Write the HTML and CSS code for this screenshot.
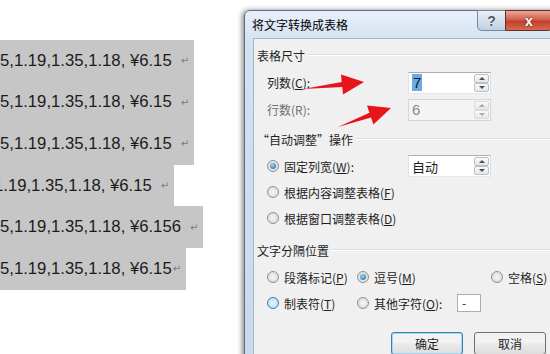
FILE: index.html
```html
<!DOCTYPE html>
<html lang="zh-CN">
<head>
    <meta charset="UTF-8">
    <title>将文字转换成表格</title>
    <link rel="stylesheet" href="styles.css">
</head>
<body>
    <div class="screen">
        <div class="doc">
            <div class="line"><span>5,1.19,1.35,1.18, ¥6.15</span><span class="mark">↵</span></div>
            <div class="line"><span>5,1.19,1.35,1.18, ¥6.15</span><span class="mark">↵</span></div>
            <div class="line"><span>5,1.19,1.35,1.18, ¥6.15</span><span class="mark">↵</span></div>
            <div class="line cut"><span>1.19,1.35,1.18, ¥6.15</span><span class="mark">↵</span></div>
            <div class="line"><span>5,1.19,1.35,1.18, ¥6.156</span><span class="mark">↵</span></div>
            <div class="line tight"><span>5,1.19,1.35,1.18, ¥6.15</span><span class="mark">↵</span></div>
        </div>

        <div class="dialog">
            <div class="titlebar">
                <span class="title">将文字转换成表格</span>
                <div class="caption">
                    <span class="help">?</span>
                    <span class="close">x</span>
                </div>
            </div>
            <div class="panel">
                <div class="group-title"><span>表格尺寸</span></div>
                <div class="fields">
                    <div class="row">
                        <span class="lbl">列数(<u>C</u>):</span>
                        <div class="spin">
                            <span class="val"><span class="sel">7</span></span>
                            <div class="updown"><span class="up"></span><span class="down"></span></div>
                        </div>
                    </div>
                    <div class="row disabled">
                        <span class="lbl">行数(R):</span>
                        <div class="spin off">
                            <span class="val">6</span>
                            <div class="updown"><span class="up"></span><span class="down"></span></div>
                        </div>
                    </div>
                </div>

                <div class="group-title second"><span>“自动调整”操作</span></div>
                <div class="fields">
                    <div class="row radio-row">
                        <span class="lbl"><i class="radio on"></i>固定列宽(<u>W</u>):</span>
                        <div class="spin">
                            <span class="val cn">自动</span>
                            <div class="updown"><span class="up"></span><span class="down"></span></div>
                        </div>
                    </div>
                    <div class="row radio-row"><i class="radio"></i>根据内容调整表格(<u>F</u>)</div>
                    <div class="row radio-row"><i class="radio"></i>根据窗口调整表格(<u>D</u>)</div>
                </div>

                <div class="group-title third"><span>文字分隔位置</span></div>
                <div class="fields">
                    <div class="row radio-row">
                        <span class="cell c1"><i class="radio"></i>段落标记(<u>P</u>)</span>
                        <span class="cell c2"><i class="radio on"></i>逗号(<u>M</u>)</span>
                        <span class="cell"><i class="radio"></i>空格(<u>S</u>)</span>
                    </div>
                    <div class="row radio-row">
                        <span class="cell c1"><i class="radio hot"></i>制表符(<u>T</u>)</span>
                        <span class="cell c2"><i class="radio"></i><span class="other">其他字符(<u>O</u>):</span><span class="tbox">-</span></span>
                    </div>
                </div>

                <div class="buttons">
                    <span class="btn default">确定</span>
                    <span class="btn">取消</span>
                </div>
            </div>
        </div>

        <svg class="pointers" width="550" height="354" viewBox="0 0 550 354">
            <polygon points="303,89 341.7,82 341,74.6 364,82 343,94.4 342.3,87"/>
            <polygon points="338,127 369.4,112.7 367,105.6 391,108 373.4,124.6 371,117.5"/>
        </svg>
    </div>
</body>
</html>
```

FILE: styles.css
```css
body {
    margin: 0;
    background-color: #fff;
    font-family: "Liberation Sans", Arial, sans-serif;
}

.screen {
    position: relative;
    display: flex;
    width: 550px;
    height: 354px;
    overflow: hidden;
}

/* documento ao fundo */
.doc {
    width: 244px;
    flex-shrink: 0;
    padding-top: 40px;
    overflow: hidden;
}

.line {
    display: flex;
    align-items: center;
    width: fit-content;
    height: 41.6px;
    padding-right: 5px;
    background-color: #c6c6c6;
    color: #1b1b1b;
    font-size: 16.7px;
    white-space: nowrap;
}

.line .mark {
    margin-left: 9px;
    font-family: "DejaVu Sans", sans-serif;
    font-size: 10px;
    color: #7a7a7a;
}

.line.cut {
    margin-left: -6px;
}

.line.tight .mark {
    margin-left: 1px;
}

/* janela */
.dialog {
    flex-shrink: 0;
    width: 330px;
    height: 360px;
    margin-top: 10px;
    padding: 0 8px;
    border: 1px solid #5d6c7f;
    border-radius: 6px 6px 0 0;
    background: linear-gradient(#e8f0fa, #d3e1f1 30px, #c9d9ec);
    box-shadow: -2px 0 5px rgba(0, 0, 0, 0.45);
    font-family: "Noto Sans CJK SC", sans-serif;
    font-size: 12px;
    color: #1e1e1e;
}

.titlebar {
    display: flex;
    justify-content: space-between;
    align-items: flex-start;
    height: 27px;
}

.title {
    margin: 7px 0 0 -1px;
    line-height: 14px;
    color: #000;
}

.caption {
    display: flex;
    margin: -1px 30px 0 0;
}

.help,
.close {
    display: flex;
    align-items: center;
    justify-content: center;
    height: 19px;
    font-family: "Liberation Sans", Arial, sans-serif;
    font-weight: bold;
    font-size: 14px;
}

.help {
    width: 27px;
    border: 1px solid #76869b;
    border-right: none;
    border-radius: 0 0 0 5px;
    background: linear-gradient(#e9f0f8, #d3dfed 50%, #bfd0e4);
    color: #4e5b6b;
    text-shadow: 0 0 2px #fff;
}

.close {
    width: 46px;
    border: 1px solid #6a2b24;
    border-radius: 0 0 5px 0;
    background: linear-gradient(#e7a99a, #d1604c 45%, #c2402b 55%, #d56a52);
    color: #fff;
    text-shadow: 0 0 2px #5a1a10;
}

.panel {
    height: 330px;
    padding-top: 7px;
    border: 1px solid #a5b5c8;
    background-color: #f0f0f0;
}

.group-title {
    display: flex;
    align-items: center;
    height: 18px;
    padding-left: 3px;
}

.group-title::after {
    content: "";
    flex: 1;
    margin-left: 3px;
    border-top: 1px solid #d5dfe5;
    border-bottom: 1px solid #fff;
}

.group-title.second {
    margin-top: 7px;
}

.group-title.third {
    margin-top: 10px;
}

.fields {
    margin-top: 5px;
}

.row {
    display: flex;
    align-items: center;
    height: 27px;
    padding-left: 13px;
}

.radio-row {
    height: 26px;
}

.lbl {
    display: flex;
    align-items: center;
    width: 141px;
}

.disabled {
    color: #6d6d6d;
}

.spin {
    display: flex;
    align-items: center;
    box-sizing: border-box;
    width: 83px;
    height: 22px;
    border: 1px solid #abadb3;
    border-color: #abadb3 #dbdfe6 #e3e9ef #e2e3ea;
    background-color: #fff;
}

.spin.off {
    border-color: #d6d6d6;
    background-color: #f4f4f4;
    color: #8a8a8a;
}

.spin .val {
    flex: 1;
    padding-left: 3px;
    font-family: "Liberation Sans", Arial, sans-serif;
    font-size: 15px;
}

.spin .val.cn {
    font-family: "Noto Sans CJK SC", sans-serif;
    font-size: 13px;
}

.sel {
    padding: 0 1px;
    background-color: #6ea9e4;
    color: #0c1a33;
}

.updown {
    display: flex;
    flex-direction: column;
    width: 15px;
    height: 18px;
    margin-right: 1px;
}

.updown span {
    flex: 1;
    display: flex;
    align-items: center;
    justify-content: center;
    border: 1px solid #b9c0c8;
    border-radius: 2px;
    background: linear-gradient(#fafafa, #e4e6e8);
}

.updown .up::before,
.updown .down::before {
    content: "";
    border-left: 3px solid transparent;
    border-right: 3px solid transparent;
}

.updown .up::before {
    border-bottom: 3px solid #4d4d4d;
}

.updown .down::before {
    border-top: 3px solid #4d4d4d;
}

.off .updown span {
    border-color: #dadada;
}

.off .updown .up::before {
    border-bottom-color: #a9a9a9;
}

.off .updown .down::before {
    border-top-color: #a9a9a9;
}

.radio {
    position: relative;
    flex-shrink: 0;
    box-sizing: border-box;
    width: 12px;
    height: 12px;
    margin-right: 5px;
    border: 1px solid #919191;
    border-radius: 50%;
    background: radial-gradient(circle, #f6f6f6, #d4d4d4);
}

.radio.on::after {
    content: "";
    position: absolute;
    left: 2px;
    top: 2px;
    width: 6px;
    height: 6px;
    border-radius: 50%;
    background: radial-gradient(circle at 40% 35%, #9ad6f8, #1d5f98);
}

.radio.hot {
    border-color: #3c7fb1;
    background: radial-gradient(circle, #eaf7fe, #a6d6f4);
}

.cell {
    display: flex;
    align-items: center;
}

.cell.c1 {
    width: 90px;
}

.cell.c2 {
    width: 134px;
}

.other {
    width: 83px;
}

.tbox {
    box-sizing: border-box;
    width: 24px;
    height: 18px;
    padding-left: 4px;
    border: 1px solid #abadb3;
    background-color: #fff;
    line-height: 15px;
}

.buttons {
    display: flex;
    gap: 11px;
    margin-top: 16px;
    padding-left: 137px;
}

.btn {
    display: flex;
    align-items: center;
    justify-content: center;
    box-sizing: border-box;
    width: 72px;
    height: 23px;
    border: 1px solid #707070;
    border-radius: 3px;
    background: linear-gradient(#f2f2f2 50%, #ebebeb 50%, #dddddd);
}

.btn.default {
    border-color: #3c7fb1;
    box-shadow: inset 0 0 0 1px #9fd8f6;
}

.pointers {
    position: absolute;
    left: 0;
    top: 0;
    pointer-events: none;
}

.pointers polygon {
    fill: #e8141c;
}
```
